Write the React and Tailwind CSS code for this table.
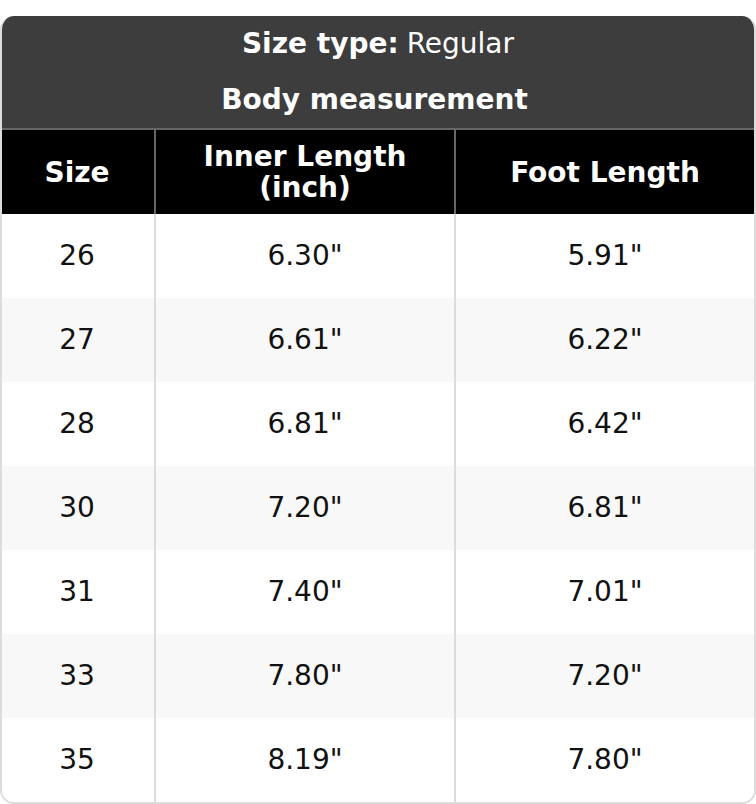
import React from "react";

const rows = [
  ["26", '6.30"', '5.91"'],
  ["27", '6.61"', '6.22"'],
  ["28", '6.81"', '6.42"'],
  ["30", '7.20"', '6.81"'],
  ["31", '7.40"', '7.01"'],
  ["33", '7.80"', '7.20"'],
  ["35", '8.19"', '7.80"'],
];

const cols = "grid grid-cols-[154px_300px_1fr]";

export default function App() {
  return (
    <div className="bg-white pt-4 font-['DejaVu_Sans',sans-serif] text-[28px]">
      <div className="rounded-[14px] overflow-hidden border-2 border-[#dcdcdc] border-t-0">
        {/* title block */}
        <div className="bg-[#3d3d3d] text-white text-center">
          <div className="h-14 flex items-center justify-center">
            <span className="font-bold">Size type:</span>
            <span className="ml-2">Regular</span>
          </div>
          <div className="h-14 flex items-center justify-center font-bold pr-[7px]">Body measurement</div>
        </div>

        {/* column heads */}
        <div className={`${cols} bg-black text-white font-bold border-t-2 border-[#666] leading-[31px]`}>
          <div className="h-[84px] flex items-center justify-center border-r-2 border-[#666] -ml-[2px]">Size</div>
          <div className="h-[84px] flex flex-col items-center justify-center border-r-2 border-[#666]">
            <span>Inner Length</span>
            <span>(inch)</span>
          </div>
          <div className="h-[84px] flex items-center justify-center">Foot Length</div>
        </div>

        {/* body rows */}
        {rows.map((r, i) => (
          <div key={r[0]} className={`${cols} text-[#111] ${i % 2 ? "bg-[#f8f8f8]" : "bg-white"}`}>
            <div className="h-[84px] flex items-center justify-center border-r-2 border-[#dcdcdc] -ml-[2px]">{r[0]}</div>
            <div className="h-[84px] flex items-center justify-center border-r-2 border-[#dcdcdc]">{r[1]}</div>
            <div className="h-[84px] flex items-center justify-center">{r[2]}</div>
          </div>
        ))}
      </div>
    </div>
  );
}
